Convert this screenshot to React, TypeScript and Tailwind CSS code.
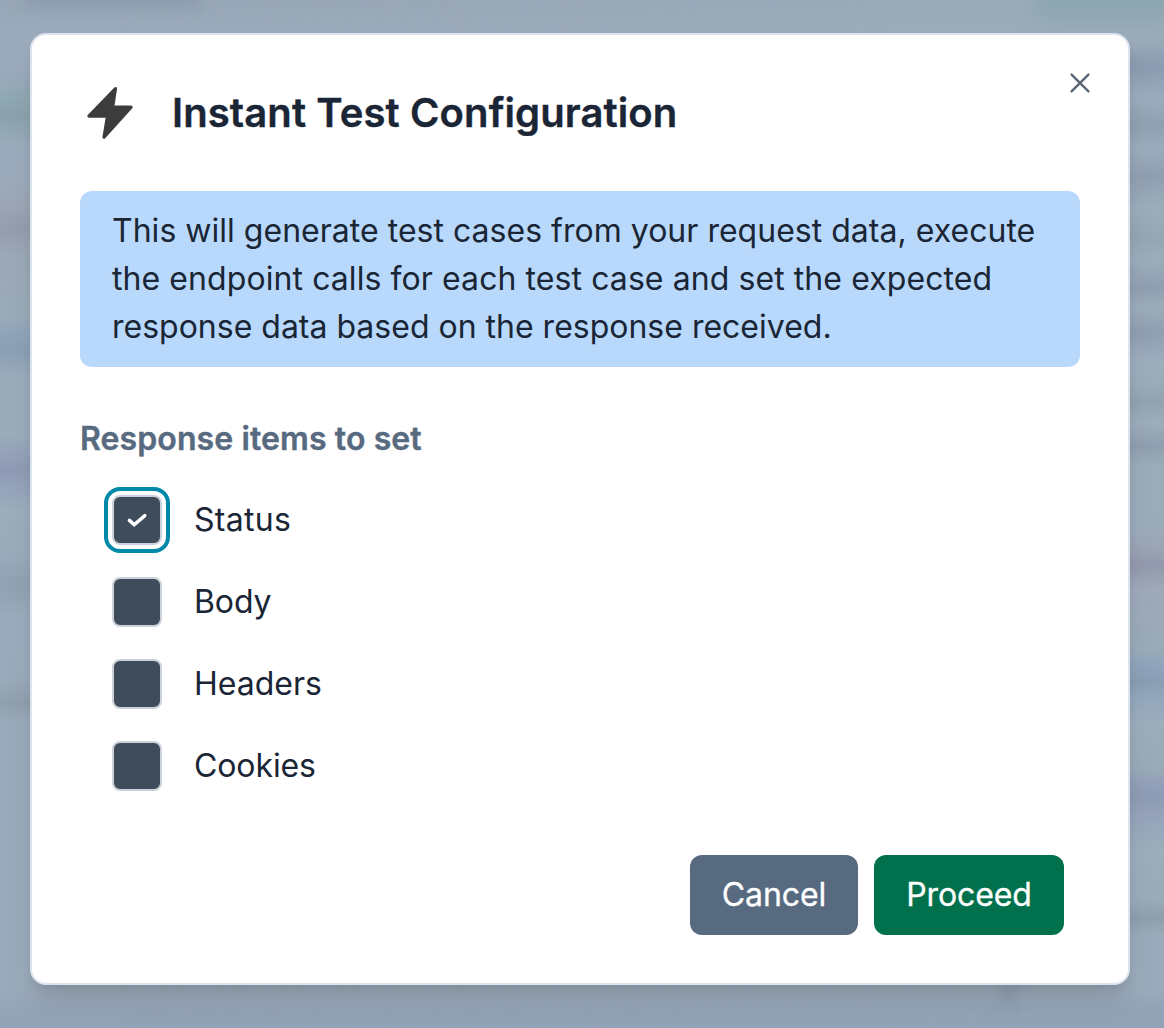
import { useState } from "react";

const ITEMS = [
  { name: "Status", tracking: "tracking-[0.3px]" },
  { name: "Body", tracking: "tracking-[-0.1px]" },
  { name: "Headers", tracking: "tracking-normal" },
  { name: "Cookies", tracking: "tracking-[-0.1px]" },
];

function BoltIcon() {
  return (
    <svg className="block h-16 w-16" viewBox="0 0 64 64" aria-hidden="true">
      <path
        d="M35.5 7.6 L8.9 35.2 H27.5 L24 56.2 L51.1 26.2 H32.6 Z"
        fill="#3c3c3c"
        stroke="#3c3c3c"
        strokeWidth="3.2"
        strokeLinejoin="round"
      />
    </svg>
  );
}

function Backdrop() {
  return (
    <div className="absolute inset-0 overflow-hidden" aria-hidden="true">
      <div className="absolute inset-0 bg-[linear-gradient(180deg,#97a6b6_0px,#9aaabb_25px,#9cabbc_60px,#99a9ba_80px,#8fa8b2_98px,#8ba2ad_116px,#9aabbb_145px,#9cabbb_180px,#9ba5b5_205px,#959daf_230px,#9ba8b7_255px,#9aaab8_315px,#8fa4ba_335px,#8b9eb4_350px,#9aacbb_378px,#9aabba_435px,#929fb9_460px,#8f9bb5_470px,#96a4bc_490px,#9cadbc_510px,#9aaaba_555px,#91a1b1_585px,#9aabbc_618px,#9aaaba_680px,#909fae_703px,#9aaaba_722px,#9aaaba_990px,#94a3b7_1010px,#93a3b5_1028px)]" />
      <div className="absolute inset-0 bg-[linear-gradient(180deg,#9aaaba_0px,#9cacbb_38px,#8b9bb0_66px,#9bacbd_98px,#90a0b0_126px,#9bacbc_150px,#909fb0_176px,#9cadbc_208px,#95a5b3_240px,#9cadbc_260px,#909fb0_288px,#9cacbb_308px,#909fb0_334px,#9dadbd_360px,#9bacba_382px,#92a2b0_402px,#9dadbc_422px,#909fb0_446px,#9bacba_468px,#9babbb_530px,#9ba4b5_548px,#9399ad_565px,#9ea9ba_590px,#99aab8_650px,#8fa4bc_665px,#899eb4_682px,#93a7bc_698px,#9cadbc_722px,#99a9b7_770px,#929fb9_785px,#8e9bb5_798px,#96a4bb_818px,#9cadbc_850px,#9aaaba_900px,#8e9ead_918px,#9aaaba_935px,#9aaaba_990px,#93a3b7_1010px,#93a3b5_1028px)] mask-[linear-gradient(90deg,transparent_10%,black_90%)]" />
      <div className="absolute -top-4 left-6 h-6 w-44 bg-[#8696a8]/60 blur-[8px]" />
      <div className="absolute -top-6 -right-4 h-11 w-36 bg-[#88a5ae]/80 blur-[11px]" />
      <div className="absolute bottom-5 left-[1003px] h-7 w-3 bg-[#8494a5]/60 blur-[7px]" />
    </div>
  );
}

function Checkbox({
  label,
  tracking,
  checked,
  focused,
  onToggle,
}: {
  label: string;
  tracking: string;
  checked: boolean;
  focused: boolean;
  onToggle: () => void;
}) {
  return (
    <label className="flex h-[50px] cursor-pointer items-center gap-8 text-[32px] leading-[48px]">
      <button
        type="button"
        role="checkbox"
        aria-checked={checked}
        aria-label={label}
        onClick={onToggle}
        className={`flex size-[50px] shrink-0 items-center justify-center rounded-lg border-2 border-[#cbd2d9] bg-[#3e4c5c] outline-[#0089a8] ${
          focused ? "outline-4 outline-offset-4" : ""
        }`}
      >
        {checked && (
          <svg className="size-6" viewBox="0 0 24 24" aria-hidden="true">
            <path d="M4.4 12.4 9.2 16.8 19.8 7.6" fill="none" stroke="white" strokeWidth="3.5" strokeLinejoin="round" strokeLinecap="round" />
          </svg>
        )}
      </button>
      <span className={tracking}>{label}</span>
    </label>
  );
}

export default function App() {
  const [selected, setSelected] = useState<string[]>(["Status"]);

  const toggle = (item: string) =>
    setSelected((current) =>
      current.includes(item) ? current.filter((i) => i !== item) : [...current, item],
    );

  return (
    <div className="relative h-[1028px] w-[1164px] overflow-hidden px-[30px] pt-[33px] font-['Inter',sans-serif] text-[#1a2635]">
      <Backdrop />
      <main
        role="dialog"
        className="relative flex h-[952px] w-[1100px] flex-col rounded-2xl border-2 border-[#dbe4ed] bg-white px-12 shadow-[0_20px_30px_-6px_rgba(0,0,0,0.1),0_8px_12px_-4px_rgba(0,0,0,0.1)]"
      >
        <button type="button" aria-label="Close" className="absolute top-9 right-9 flex size-6 items-center justify-center">
          <svg className="size-6" viewBox="0 0 24 24" aria-hidden="true">
            <path d="M3.6 3.6 20.4 20.4M20.4 3.6 3.6 20.4" stroke="#5b6675" strokeWidth="2.4" strokeLinecap="round" />
          </svg>
        </button>
        <header className="mt-[46px] flex h-16 items-center gap-8">
          <BoltIcon />
          <h1 className="-ml-1 text-[40px] leading-[56px] font-semibold tracking-[0.11px] whitespace-nowrap [-webkit-text-stroke:0.4px_#1a2635]">
            Instant Test Configuration
          </h1>
        </header>
        <p className="mt-[46px] rounded-xl bg-[#b8d9fc] px-8 py-4 text-[32px] leading-[48px]">
          <span className="tracking-[0.02px]">This will generate test cases from your request data, execute </span>
          <span className="tracking-[0.08px]">the endpoint calls for each test case and set the expected </span>
          <span>response data based on the response received.</span>
        </p>
        <h2 className="mt-12 text-[32px] leading-[48px] font-semibold tracking-[0.1px] text-[#576a80] [-webkit-text-stroke:0.4px_#576a80]">
          Response items to set
        </h2>
        <div className="mt-8 flex flex-col gap-8 pl-8">
          {ITEMS.map(({ name, tracking }) => (
            <Checkbox
              key={name}
              label={name}
              tracking={tracking}
              checked={selected.includes(name)}
              focused={name === "Status"}
              onToggle={() => toggle(name)}
            />
          ))}
        </div>
        <footer className="mt-16 flex justify-end gap-4 pr-4 text-[32px] leading-[48px] tracking-[-0.1px] text-white [-webkit-text-stroke:0.3px_white]">
          <button type="button" className="h-20 w-[168px] rounded-xl bg-[#576a80]">
            Cancel
          </button>
          <button type="button" className="h-20 w-[190px] rounded-xl bg-[#00714c]">
            Proceed
          </button>
        </footer>
      </main>
    </div>
  );
}
